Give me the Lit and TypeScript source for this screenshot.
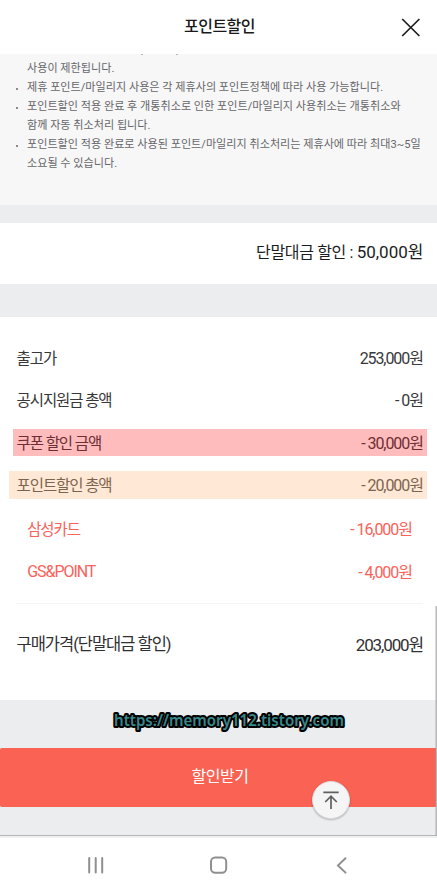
import { LitElement, html, css } from "lit";
import { customElement } from "lit/decorators.js";
import { classMap } from "lit/directives/class-map.js";

interface Row {
  label: string;
  value: string;
  tone: string;
}

const ROWS: Row[] = [
  { label: "출고가", value: "253,000원", tone: "plain" },
  { label: "공시지원금 총액", value: "- 0원", tone: "plain" },
  { label: "쿠폰 할인 금액", value: "- 30,000원", tone: "coupon" },
  { label: "포인트할인 총액", value: "- 20,000원", tone: "point" },
  { label: "삼성카드", value: "- 16,000원", tone: "sub" },
  { label: "GS&POINT", value: "- 4,000원", tone: "sub" },
];

const NOTES: string[][] = [
  ["제휴 포인트/마일리지 사용은 각 제휴사의 포인트정책에 따라 사용 가능합니다."],
  ["포인트할인 적용 완료 후 개통취소로 인한 포인트/마일리지 사용취소는 개통취소와", "함께 자동 취소처리 됩니다."],
  ["포인트할인 적용 완료로 사용된 포인트/마일리지 취소처리는 제휴사에 따라 최대3~5일", "소요될 수 있습니다."],
];

@customElement("price-row")
class PriceRow extends LitElement {
  static properties = { label: {}, value: {}, tone: {} };
  declare label: string;
  declare value: string;
  declare tone: string;

  static styles = css`
    :host { display: block; height: 42.8px; }
    .row {
      height: 100%;
      display: flex;
      align-items: center;
      justify-content: space-between;
      padding: 0 14.2px 0 16.6px;
      color: #38383a;
      white-space: pre;
      box-sizing: border-box;
    }
    .label { font-size: 15.5px; letter-spacing: -1.1px; }
    .value { font-size: 16px; letter-spacing: -1.08px; }
    .label.latin { font-size: 16px; letter-spacing: -1.05px; padding-top: 2px; }
    .coupon, .point {
      height: 27px;
      margin: 0 10.5px 0 12.5px;
      padding: 0 3.7px 1px 4.1px;
      background: #ffbcbd;
      color: #6d2f34;
    }
    .point {
      height: 28px;
      margin-left: 8.5px;
      padding-left: 8.1px;
      background: #ffe8d5;
      color: #7c654f;
    }
    .wrap { height: 100%; display: flex; flex-direction: column; justify-content: center; }
    .sub { color: #f9625a; padding: 0 25.2px 0 27.2px; }
  `;

  render() {
    const latin = /^[A-Z&]+$/.test(this.label);
    return html`<div class="wrap">
      <div class="row ${this.tone}">
        <span class=${classMap({ label: true, latin })}>${this.label}</span>
        <span class="value">${this.value}</span>
      </div>
    </div>`;
  }
}

@customElement("app-root")
class AppRoot extends LitElement {
  static styles = css`
    :host {
      display: flex;
      flex-direction: column;
      position: relative;
      width: 437px;
      height: 888px;
      overflow: hidden;
      background: #ecedef;
      color: #202022;
      font-family: Roboto, "Noto Sans CJK KR", sans-serif;
    }
    * { box-sizing: border-box; }
    svg { display: block; }
    header {
      height: 54px;
      flex: none;
      background: #fff;
      display: grid;
      grid-template-columns: 60px 1fr 60px;
      align-items: center;
    }
    h1 {
      grid-column: 2;
      margin: 0;
      padding: 0 0 1px 2px;
      text-align: center;
      font-size: 16px;
      line-height: 24px;
      font-weight: 500;
      letter-spacing: -0.5px;
      color: #1a1a1a;
    }
    .close { justify-self: end; margin-right: 16px; }
    .notice {
      height: 151px;
      flex: none;
      background: #f7f7f7;
      padding: 0 0 0 16px;
      color: #66666a;
      font-size: 11.1px;
      line-height: 19.1px;
      white-space: nowrap;
    }
    .cut {
      height: 5px;
      padding-left: 125px;
      display: flex;
      gap: 33px;
    }
    .cut i { width: 2px; height: 1px; background: #b4b4b6; }
    ul { list-style: none; margin: 0; padding: 0; }
    li { display: flex; }
    li::before {
      content: "";
      width: 2px;
      height: 2px;
      border-radius: 1px;
      background: #66666a;
      margin: 10px 9px 0 0;
      flex: none;
    }
    .lead { padding-left: 11px; }
    .line { display: block; }
    .discount {
      margin-top: 18px;
      height: 61px;
      flex: none;
      background: #fff;
      display: flex;
      justify-content: flex-end;
      align-items: center;
      padding: 0 13.6px 6px 0;
      white-space: pre;
      color: #1c1c1e;
    }
    .discount .name { font-size: 16px; letter-spacing: -0.35px; }
    .discount .amount { font-size: 17px; letter-spacing: 0; }
    .prices {
      margin-top: 32.5px;
      height: 383.5px;
      flex: none;
      background: #fff;
      padding-top: 18.7px;
    }
    .total {
      margin: 11.3px 14px 0 16px;
      border-top: 1px solid #f5f5f5;
      height: 79px;
      display: flex;
      align-items: center;
      justify-content: space-between;
      color: #303032;
    }
    .total .name { font-size: 16.5px; letter-spacing: -1.02px; margin-left: 0.5px; }
    .total .amount { font-size: 17px; letter-spacing: -1.13px; }
    .url { height: 48px; flex: none; }
    .link {
      font-family: "Noto Sans", "Open Sans", sans-serif;
      font-size: 15.5px;
      font-weight: 600;
      fill: #35898c;
      stroke: #000;
      stroke-width: 4px;
      stroke-linejoin: round;
      paint-order: stroke;
    }
    .cta {
      border: 0;
      padding: 0 0 6px 3px;
      height: 59px;
      flex: none;
      background: #fa6253;
      border-radius: 2px;
      color: #fff;
      font: 16px Roboto, "Noto Sans CJK KR", sans-serif;
      letter-spacing: -0.5px;
      text-align: center;
    }
    .gap { height: 29px; flex: none; border-bottom: 1px solid #b4b5b8; }
    .edge { height: 2px; flex: none; background: #eff0f2; }
    nav { flex: 1; background: #fff; }
    .scroll {
      position: absolute;
      right: 0;
      top: 606px;
      width: 2px;
      height: 230px;
      background: linear-gradient(to right, rgba(150, 150, 153, 0.35) 50%, #b9b9bb 50%);
    }
    .top {
      position: absolute;
      left: 312px;
      top: 781px;
      width: 38px;
      height: 38px;
      border-radius: 50%;
      border: 1px solid #dcdcdc;
      background: #f5f5f5;
      box-shadow: 0 1px 2px rgba(0, 0, 0, 0.25);
    }
  `;

  render() {
    return html`
      <header>
        <h1>포인트할인</h1>
        <svg class="close" width="20" height="20" viewBox="0 0 20 20" fill="none" stroke="#1c1c1e" stroke-width="1.7">
          <path d="M1.2 2 L18.4 19 M18.4 2 L1.2 19" />
        </svg>
      </header>
      <section class="notice">
        <div class="cut"><i></i><i></i></div>
        <div class="lead">사용이 제한됩니다.</div>
        <ul>
          ${NOTES.map((n) => html`<li><div>${n.map((t) => html`<span class="line">${t}</span>`)}</div></li>`)}
        </ul>
      </section>
      <section class="discount"><span class="name">단말대금 할인 : </span><span class="amount">50,000원</span></section>
      <section class="prices">
        ${ROWS.map((r) => html`<price-row .label=${r.label} .value=${r.value} .tone=${r.tone}></price-row>`)}
        <div class="total"><span class="name">구매가격(단말대금 할인)</span><span class="amount">203,000원</span></div>
      </section>
      <svg class="url" width="437" height="48" viewBox="0 0 437 48">
        <text class="link" x="114" y="26" textLength="230" lengthAdjust="spacingAndGlyphs">https://memory112.tistory.com</text>
      </svg>
      <button class="cta">할인받기</button>
      <div class="gap"></div>
      <div class="edge"></div>
      <nav>
        <svg width="437" height="49" viewBox="0 0 437 49" fill="none" stroke="#8f8f91" stroke-width="2" stroke-linecap="round">
          <path d="M89.2 20v14.5M95.7 20v14.5M102.2 20v14.5" />
          <rect x="211" y="19.4" width="15.2" height="15.4" rx="4.2" />
          <path d="M345.5 20.2l-7.5 7.2 7.5 7.2" />
        </svg>
      </nav>
      <div class="scroll"></div>
      <div class="top">
        <svg width="36" height="36" viewBox="0 0 36 36" fill="none" stroke="#606062" stroke-width="1.7">
          <path d="M10.3 10.3h15.4M18 27V14.6M12.2 20L18 14.2l5.8 5.8" />
        </svg>
      </div>
    `;
  }
}
